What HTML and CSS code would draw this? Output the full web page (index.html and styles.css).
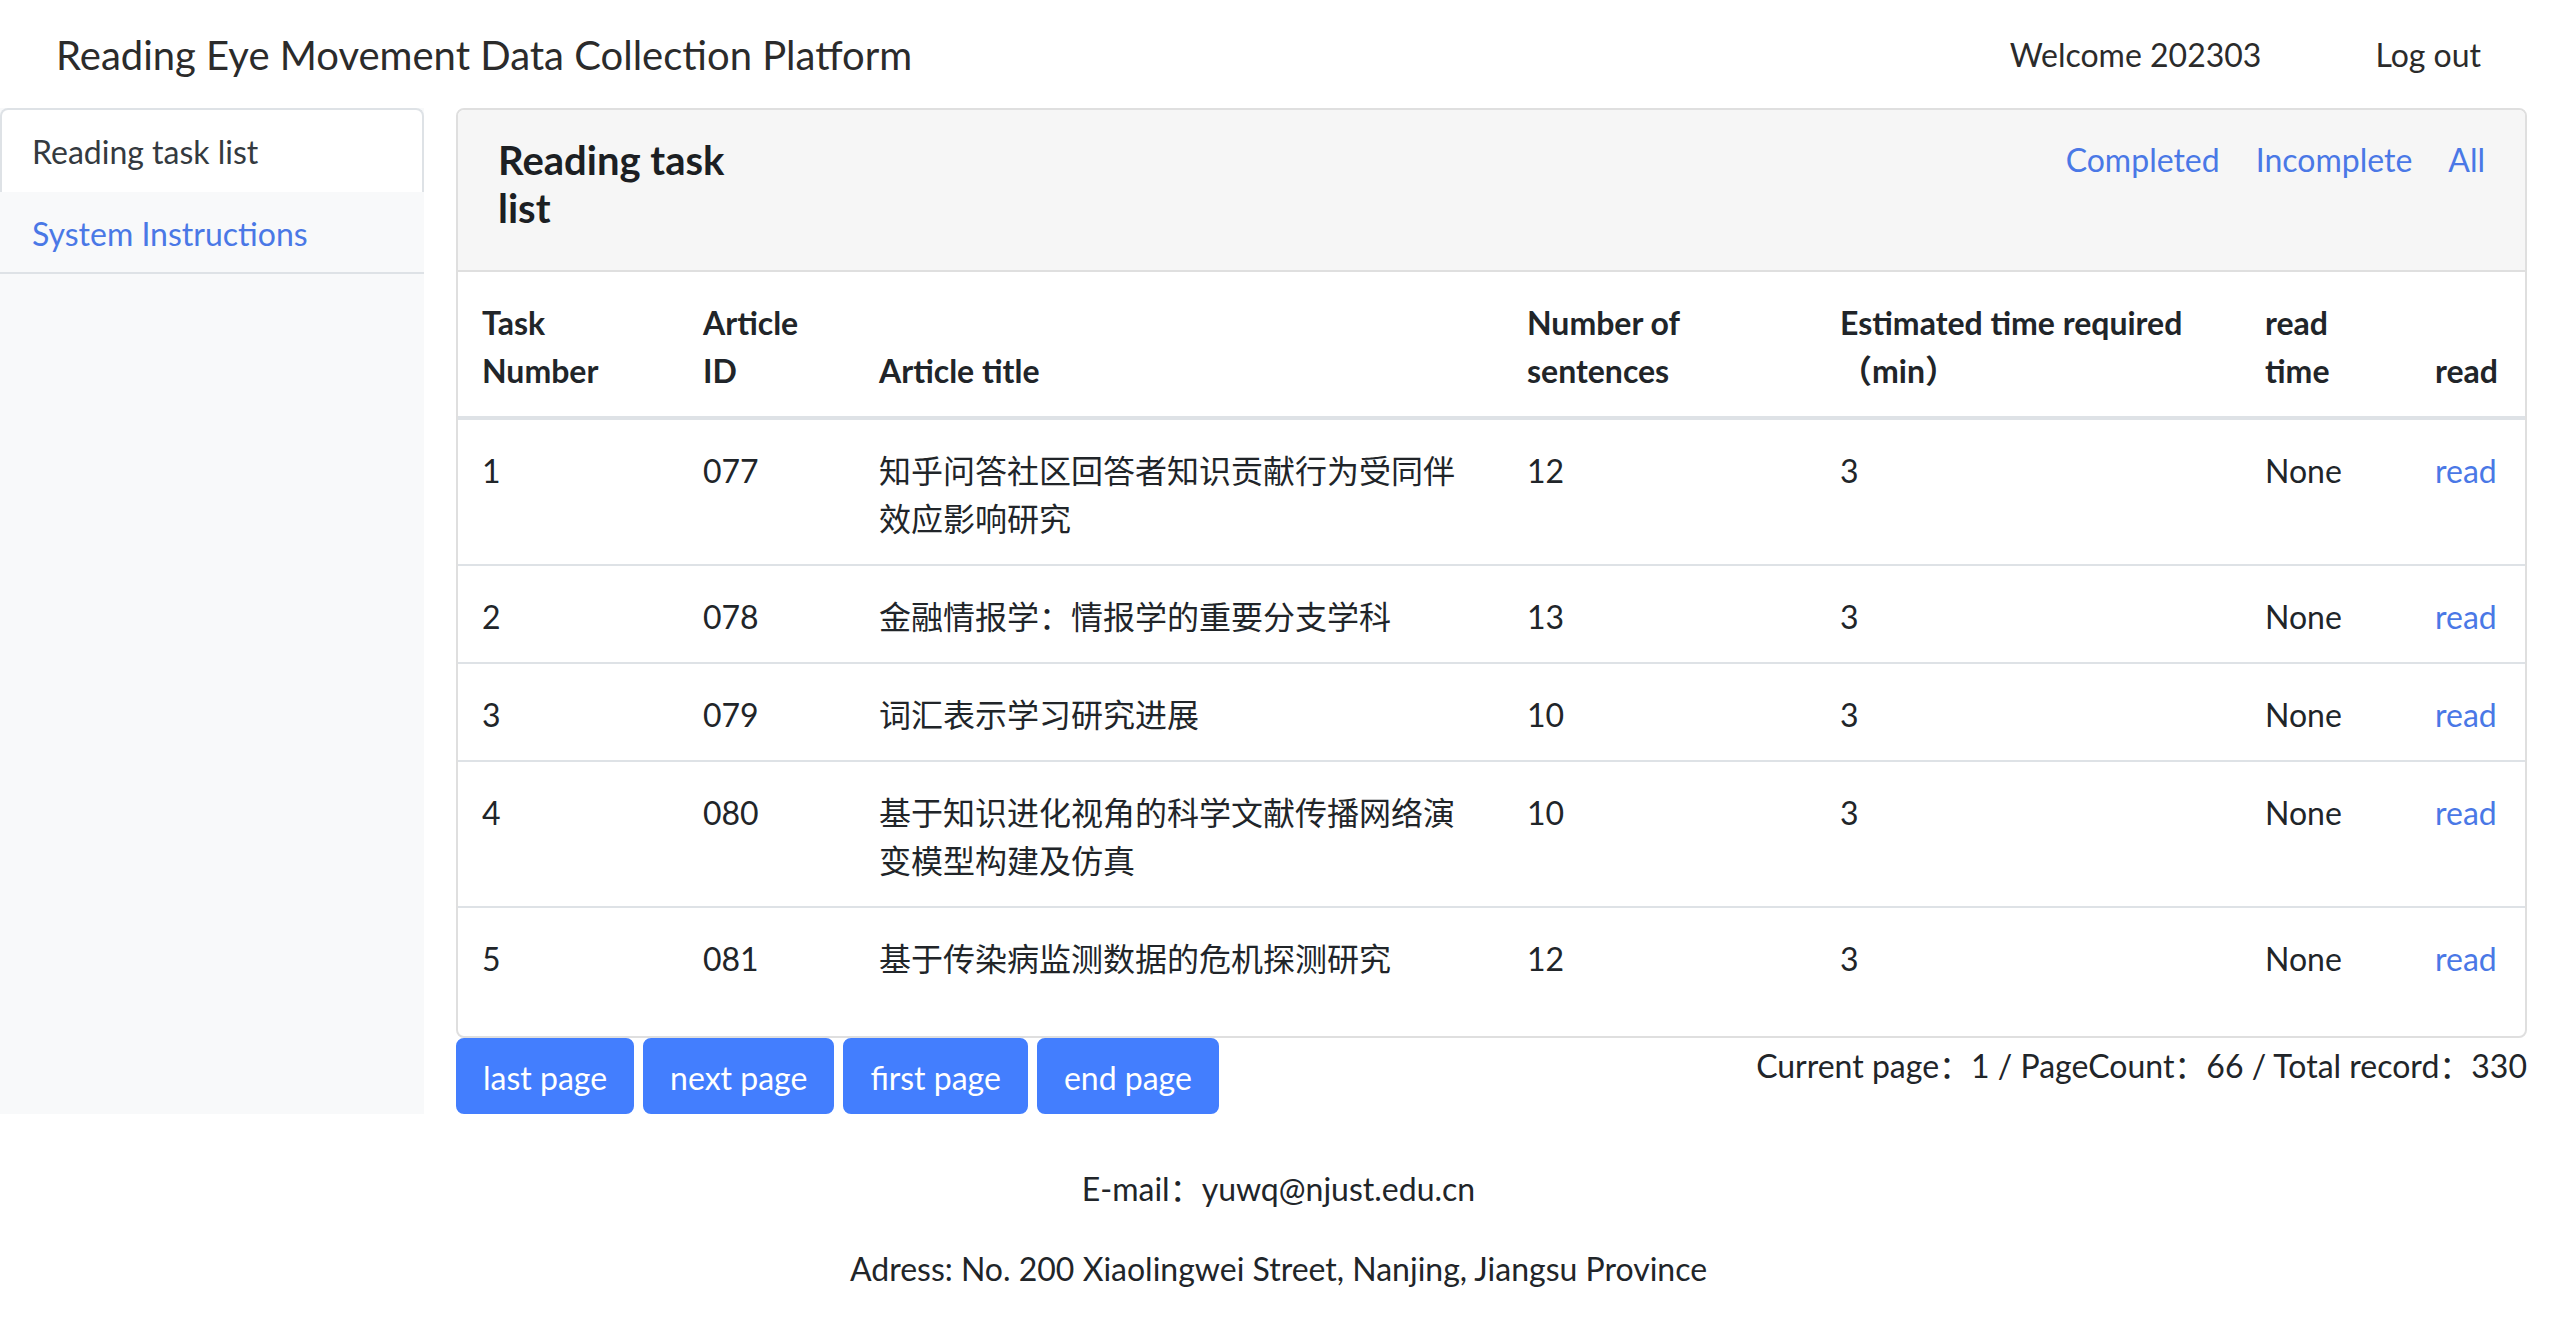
FILE: index.html
```html
<!DOCTYPE html>
<html lang="en">
<head>
<meta charset="utf-8">
<title>Reading Eye Movement Data Collection Platform</title>
<link rel="stylesheet" href="styles.css">
</head>
<body>
<nav class="navbar">
  <span class="brand">Reading Eye Movement Data Collection Platform</span>
  <div class="nav-right">
    <span class="welcome">Welcome 202303</span>
    <a class="logout" href="#">Log out</a>
  </div>
</nav>
<div class="layout">
  <aside class="sidebar">
    <ul class="side-nav">
      <li class="side-item active">Reading task list</li>
      <li class="side-item link">System Instructions</li>
    </ul>
  </aside>
  <main class="main">
    <div class="card">
      <div class="card-header">
        <h5 class="card-title">Reading task list</h5>
        <div class="filters">
          <a href="#">Completed</a>
          <a href="#">Incomplete</a>
          <a href="#">All</a>
        </div>
      </div>
      <table class="tasks">
        <colgroup>
          <col class="c1"><col class="c2"><col class="c3"><col class="c4"><col class="c5"><col class="c6"><col class="c7">
        </colgroup>
        <thead>
          <tr>
            <th>Task Number</th>
            <th>Article ID</th>
            <th>Article title</th>
            <th>Number of sentences</th>
            <th class="nowrap">Estimated time required<br>（min）</th>
            <th>read time</th>
            <th>read</th>
          </tr>
        </thead>
        <tbody>
          <tr><td>1</td><td>077</td><td>知乎问答社区回答者知识贡献行为受同伴效应影响研究</td><td>12</td><td>3</td><td>None</td><td><a href="#">read</a></td></tr>
          <tr><td>2</td><td>078</td><td>金融情报学：情报学的重要分支学科</td><td>13</td><td>3</td><td>None</td><td><a href="#">read</a></td></tr>
          <tr><td>3</td><td>079</td><td>词汇表示学习研究进展</td><td>10</td><td>3</td><td>None</td><td><a href="#">read</a></td></tr>
          <tr><td>4</td><td>080</td><td>基于知识进化视角的科学文献传播网络演变模型构建及仿真</td><td>10</td><td>3</td><td>None</td><td><a href="#">read</a></td></tr>
          <tr><td>5</td><td>081</td><td>基于传染病监测数据的危机探测研究</td><td>12</td><td>3</td><td>None</td><td><a href="#">read</a></td></tr>
        </tbody>
      </table>
    </div>
    <div class="pager">
      <div class="buttons">
        <button class="btn">last page</button>
        <button class="btn">next page</button>
        <button class="btn">first page</button>
        <button class="btn">end page</button>
      </div>
      <span class="page-info">Current page：1 / PageCount：66 / Total record：330</span>
    </div>
  </main>
</div>
<footer class="footer">
  <p>E-mail：yuwq@njust.edu.cn</p>
  <p>Adress: No. 200 Xiaolingwei Street, Nanjing, Jiangsu Province</p>
</footer>
</body>
</html>
```
FILE: styles.css
```css
* { box-sizing: border-box; }
html, body { margin: 0; padding: 0; }
body {
  font-family: Lato, "Noto Sans CJK SC", sans-serif;
  font-size: 32px;
  line-height: 1.5;
  color: #212529;
  background: #fff;
}
a { color: #4a78e6; text-decoration: none; }

.navbar {
  height: 108px;
  display: flex;
  align-items: center;
  justify-content: space-between;
  padding: 2px 76px 0 56px;
}
.brand { font-size: 40px; color: #2b2b2b; }
.nav-right { display: flex; align-items: center; gap: 114px; }
.welcome, .logout { color: #2b2b2b; }

.layout {
  display: flex;
  gap: 32px;
  padding-right: 30px;
}
.sidebar {
  width: 424px;
  flex: none;
  background: #f8f9fa;
}
.side-nav {
  list-style: none;
  margin: 0;
  padding: 0;
  border-bottom: 2px solid #dee2e6;
}
.side-item {
  padding: 18px 32px 14px;
  line-height: 48px;
}
.side-item.active {
  background: #fff;
  border: 2px solid #dee2e6;
  border-bottom: none;
  border-radius: 8px 8px 0 0;
  padding: 18px 30px 16px;
  color: #343a40;
}
.side-item.link { color: #4a78e6; }

.main { flex: 1; min-width: 0; }
.card {
  border: 2px solid #dfdfdf;
  border-radius: 8px;
  overflow: hidden;
  background: #fff;
}
.card-header {
  display: flex;
  justify-content: space-between;
  align-items: flex-start;
  background: #f6f6f6;
  padding: 26px 40px 22px;
  border-bottom: 2px solid #dfdfdf;
}
.card-title {
  margin: 0 0 16px;
  width: 260px;
  font-size: 40px;
  line-height: 1.2;
  font-weight: 700;
  color: #1c1f23;
}
.filters { display: flex; gap: 36px; line-height: 48px; }

.tasks {
  width: 100%;
  border-collapse: collapse;
  margin-bottom: 32px;
}
.c1 { width: 221px; }
.c2 { width: 176px; }
.c3 { width: 648px; }
.c4 { width: 313px; }
.c5 { width: 425px; }
.c6 { width: 170px; }
.c7 { width: 114px; }
.tasks th, .tasks td {
  padding: 27px 24px 21px;
  text-align: left;
  vertical-align: top;
  border-top: 2px solid #dee2e6;
  line-height: 48px;
}
.tasks thead th {
  vertical-align: bottom;
  border-top: none;
  border-bottom: 4px solid #dee2e6;
  font-weight: 700;
}
.tasks thead th.nowrap { white-space: nowrap; }
.tasks tbody tr:first-child td { border-top: none; }

.pager {
  display: flex;
  justify-content: space-between;
  align-items: flex-start;
}
.buttons { display: flex; gap: 9px; }
.btn {
  font-family: inherit;
  font-size: 32px;
  line-height: 48px;
  padding: 14px 25px 10px;
  color: #fff;
  background: #437efe;
  border: 2px solid #437efe;
  border-radius: 8px;
}
.page-info { line-height: 48px; padding-top: 4px; }

.footer {
  text-align: center;
  padding-top: 51px;
}
.footer p { margin: 0 0 32px; line-height: 48px; }
```
